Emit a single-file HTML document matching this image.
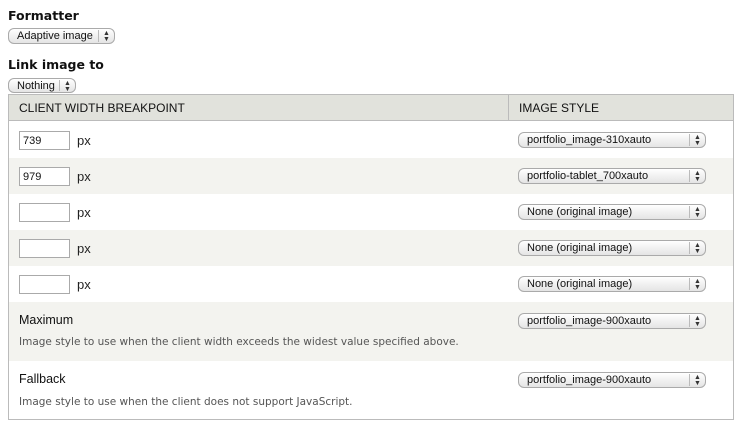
<!DOCTYPE html>
<html><head><style>
body{margin:0;width:743px;height:434px;background:#fff;font-family:"Liberation Sans",sans-serif;position:relative;overflow:hidden;color:#222}
.a{position:absolute}
.lbl{font-weight:bold;font-size:12.5px;color:#111;font-family:"DejaVu Sans",sans-serif}
.sel{position:absolute;height:16px;border:1px solid #aaa;border-radius:6px;background:linear-gradient(#fff,#e4e4e4);font-size:11px;line-height:15px;box-sizing:border-box;padding-left:8px;color:#111}
.sel .ar{position:absolute;right:0;top:1px;bottom:1px;width:15px;border-left:1px solid #bbb;font-size:7px;line-height:6px;text-align:center;padding-top:1px;color:#333}
.row{position:absolute;left:9px;width:724px}
.inp{position:absolute;left:19px;width:51px;height:19px;border:1px solid #aaa;box-sizing:border-box;background:#fff;font-size:11px;line-height:19px;padding-left:3px;color:#111}
.px{position:absolute;left:77px;font-size:13px}
.t{font-size:12.5px;color:#111}
.d{font-size:10.5px;color:#555;font-family:"DejaVu Sans",sans-serif}
</style></head><body>
<div class="a lbl" style="left:8px;top:8px">Formatter</div>
<div class="sel" style="left:8px;top:28px;width:107px;height:16px">Adaptive image<div class="ar">▲<br>▼</div></div>
<div class="a lbl" style="left:8px;top:57px">Link image to</div>
<div class="sel" style="left:8px;top:78px;width:68px;height:15px">Nothing<div class="ar">▲<br>▼</div></div>

<div class="a" style="left:8px;top:94px;width:726px;height:326px;border:1px solid #bbb;box-sizing:border-box"></div>
<div class="row" style="top:95px;height:26px;background:#e1e2dc;border-bottom:1px solid #bbb;box-sizing:border-box"></div>
<div class="a" style="left:508px;top:95px;width:1px;height:26px;background:#bbb"></div>
<div class="a t" style="left:19px;top:101px;font-size:12px">CLIENT WIDTH BREAKPOINT</div>
<div class="a t" style="left:519px;top:101px;font-size:12px">IMAGE STYLE</div>

<div class="row" style="top:158px;height:36px;background:#f3f3ef"></div>
<div class="row" style="top:230px;height:36px;background:#f3f3ef"></div>
<div class="row" style="top:302px;height:59px;background:#f3f3ef"></div>

<div class="inp" style="top:131px">739</div><div class="a px" style="top:133px">px</div>
<div class="inp" style="top:167px">979</div><div class="a px" style="top:169px">px</div>
<div class="inp" style="top:203px"></div><div class="a px" style="top:205px">px</div>
<div class="inp" style="top:239px"></div><div class="a px" style="top:241px">px</div>
<div class="inp" style="top:275px"></div><div class="a px" style="top:277px">px</div>

<div class="sel" style="left:518px;top:132px;width:188px">portfolio_image-310xauto<div class="ar">▲<br>▼</div></div>
<div class="sel" style="left:518px;top:168px;width:188px">portfolio-tablet_700xauto<div class="ar">▲<br>▼</div></div>
<div class="sel" style="left:518px;top:204px;width:188px">None (original image)<div class="ar">▲<br>▼</div></div>
<div class="sel" style="left:518px;top:240px;width:188px">None (original image)<div class="ar">▲<br>▼</div></div>
<div class="sel" style="left:518px;top:276px;width:188px">None (original image)<div class="ar">▲<br>▼</div></div>
<div class="sel" style="left:518px;top:313px;width:188px">portfolio_image-900xauto<div class="ar">▲<br>▼</div></div>
<div class="sel" style="left:518px;top:372px;width:188px">portfolio_image-900xauto<div class="ar">▲<br>▼</div></div>

<div class="a t" style="left:19px;top:313px">Maximum</div>
<div class="a d" style="left:19px;top:336px">Image style to use when the client width exceeds the widest value specified above.</div>
<div class="a t" style="left:19px;top:372px">Fallback</div>
<div class="a d" style="left:19px;top:396px">Image style to use when the client does not support JavaScript.</div>
</body></html>
